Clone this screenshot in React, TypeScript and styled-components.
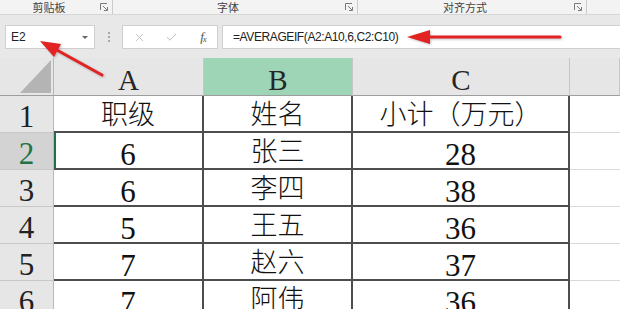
import { Fragment } from "react"
import styled, { createGlobalStyle } from "styled-components"
import { X, Check } from "lucide-react"

const GlobalStyle = createGlobalStyle`
    html, body {
        margin: 0;
        padding: 0;
        background: #ffffff;
        overflow: hidden;
    }
    body {
        font-family: "Liberation Sans", "Noto Sans CJK SC", sans-serif;
    }
`

const Page = styled.div`
    position: relative;
    width: 620px;
    height: 309px;
    overflow: hidden;
    background: #ffffff;
`

const Ribbon = styled.div`
    display: flex;
    height: 14px;
    background: #f3f3f3;
    border-bottom: 1px solid #d6d6d6;
`

const Group = styled.div<{ $w?: number }>`
    display: flex;
    align-items: center;
    box-sizing: border-box;
    width: ${p => (p.$w ? `${p.$w}px` : "auto")};
    flex: ${p => (p.$w ? "none" : "1")};
    border-right: ${p => (p.$w ? "1px solid #cbcbcb" : "none")};
`

const GroupLabel = styled.div`
    flex: 1;
    text-align: center;
    font-family: "Noto Sans CJK SC", sans-serif;
    font-size: 11px;
    line-height: 14px;
    color: #444444;
`

const Launcher = styled.div`
    width: 14px;
    display: flex;
    align-items: center;
    padding-left: 2px;
    box-sizing: border-box;
`

const FormulaBand = styled.div`
    display: flex;
    align-items: flex-start;
    height: 43px;
    box-sizing: border-box;
    padding: 10px 0 0 5px;
    background: #e8e8e8;
`

const NameBox = styled.div`
    display: flex;
    align-items: center;
    justify-content: space-between;
    width: 90px;
    height: 24px;
    box-sizing: border-box;
    padding: 0 6px 0 5px;
    background: #ffffff;
    border: 1px solid #cfcfcf;
    font-size: 12px;
    color: #222222;
`

const DropArrow = styled.span`
    width: 0;
    height: 0;
    border-left: 3px solid transparent;
    border-right: 3px solid transparent;
    border-top: 3px solid #666666;
`

const Dots = styled.div`
    width: 27px;
    height: 24px;
    display: flex;
    flex-direction: column;
    align-items: center;
    justify-content: center;
    gap: 2px;
`

const Dot = styled.span`
    width: 2px;
    height: 2px;
    background: #a8a8a8;
`

const FxBox = styled.div`
    display: grid;
    grid-template-columns: repeat(3, 32px);
    align-items: center;
    justify-items: center;
    width: 96px;
    height: 24px;
    box-sizing: border-box;
    background: #ffffff;
    border: 1px solid #cfcfcf;
    color: #b4b4b4;
`

const Fx = styled.span`
    font-family: "Liberation Serif", serif;
    font-style: italic;
    font-size: 13px;
    color: #555555;
    letter-spacing: -1px;

    sub {
        font-size: 9px;
        vertical-align: -1px;
    }
`

const FormulaInput = styled.div`
    flex: 1;
    height: 24px;
    box-sizing: border-box;
    margin-left: 4px;
    padding-left: 10px;
    background: #ffffff;
    border: 1px solid #cfcfcf;
    border-right: none;
    font-size: 12px;
    line-height: 22px;
    letter-spacing: -0.4px;
    color: #222222;
`

const Sheet = styled.div`
    display: grid;
    grid-template-columns: 54px 150px 149px 217px 1fr;
    grid-template-rows: 38px;
    grid-auto-rows: 37px;
`

const Corner = styled.div`
    display: flex;
    align-items: flex-end;
    justify-content: flex-end;
    padding: 0 2px 2px 0;
    box-sizing: border-box;
    background: #e6e6e6;
    border-right: 1px solid #b8b8b8;
    border-bottom: 1px solid #9e9e9e;
`

const CornerTriangle = styled.div`
    width: 31px;
    height: 33px;
    background: #b4b4b4;
    clip-path: polygon(100% 0, 100% 100%, 0 100%);
`

const ColHeader = styled.div<{ $selected?: boolean }>`
    display: flex;
    align-items: center;
    justify-content: center;
    box-sizing: border-box;
    padding-top: 7px;
    background: ${p => (p.$selected ? "#9fd5b7" : "#e6e6e6")};
    border-right: 1px solid #c6c6c6;
    border-bottom: 1px solid #9e9e9e;
    font-family: "Liberation Serif", serif;
    font-size: 29px;
    line-height: 1;
    color: #262626;
`

const RowHeader = styled.div<{ $selected?: boolean }>`
    display: flex;
    align-items: center;
    justify-content: center;
    box-sizing: border-box;
    padding-top: 5px;
    background: ${p => (p.$selected ? "#d3d3d3" : "#e6e6e6")};
    border-right: 1px solid #b8b8b8;
    border-bottom: 1px solid #c8c8c8;
    font-family: "Liberation Serif", serif;
    font-size: 31px;
    line-height: 1;
    color: ${p => (p.$selected ? "#217346" : "#222222")};
`

const Cell = styled.div<{ $cjk?: boolean; $active?: boolean }>`
    display: flex;
    align-items: center;
    justify-content: center;
    box-sizing: border-box;
    padding-top: ${p => (p.$cjk ? 4 : 7)}px;
    background: #ffffff;
    border-right: 2px solid #4d4d4d;
    border-bottom: 2px solid #4d4d4d;
    box-shadow: ${p => (p.$active ? "inset 2px 0 0 #217346" : "none")};
    font-family: "Liberation Serif", "Noto Sans CJK SC", serif;
    font-size: ${p => (p.$cjk ? 27 : 31)}px;
    font-weight: ${p => (p.$cjk ? 300 : 400)};
    line-height: 1;
    color: #111111;
    white-space: nowrap;
`

const EmptyCell = styled.div`
    background: #ffffff;
    border-bottom: 1px solid #d9d9d9;
`

const Overlay = styled.svg`
    position: absolute;
    top: 0;
    left: 0;
    pointer-events: none;
    filter: drop-shadow(1px 1px 1px rgba(0, 0, 0, 0.25));
`

function LauncherIcon() {
    return (
        <svg width="8" height="8" viewBox="0 0 8 8" fill="none" stroke="#7a7a7a" strokeWidth="1">
            <path d="M0.5 7 V0.5 H7" />
            <path d="M3 3 L7 7 M7.5 4 V7.5 H4" />
        </svg>
    )
}

const groups = [
    { label: "剪贴板", w: 113 },
    { label: "字体", w: 245 },
    { label: "对齐方式", w: 229 },
]

const rows: [string, string, string][] = [
    ["职级", "姓名", "小计（万元）"],
    ["6", "张三", "28"],
    ["6", "李四", "38"],
    ["5", "王五", "36"],
    ["7", "赵六", "37"],
    ["7", "阿伟", "36"],
]

const isCjk = (s: string) => /[\u4e00-\u9fff]/.test(s)

export default function App() {
    return (
        <Page>
            <GlobalStyle />
            <Ribbon>
                {groups.map(g => (
                    <Group key={g.label} $w={g.w}>
                        <GroupLabel>{g.label}</GroupLabel>
                        <Launcher>
                            <LauncherIcon />
                        </Launcher>
                    </Group>
                ))}
                <Group />
            </Ribbon>

            <FormulaBand>
                <NameBox>
                    <span>E2</span>
                    <DropArrow />
                </NameBox>
                <Dots>
                    <Dot />
                    <Dot />
                    <Dot />
                </Dots>
                <FxBox>
                    <X size={13} strokeWidth={1.4} />
                    <Check size={13} strokeWidth={1.6} />
                    <Fx>f<sub>x</sub></Fx>
                </FxBox>
                <FormulaInput>=AVERAGEIF(A2:A10,6,C2:C10)</FormulaInput>
            </FormulaBand>

            <Sheet>
                <Corner>
                    <CornerTriangle />
                </Corner>
                <ColHeader>A</ColHeader>
                <ColHeader $selected>B</ColHeader>
                <ColHeader>C</ColHeader>
                <ColHeader />

                {rows.map((r, i) => (
                    <Fragment key={i}>
                        <RowHeader $selected={i === 1}>{i + 1}</RowHeader>
                        {r.map((v, j) => (
                            <Cell key={j} $cjk={isCjk(v)} $active={i === 1 && j === 0}>
                                {v}
                            </Cell>
                        ))}
                        <EmptyCell />
                    </Fragment>
                ))}
            </Sheet>

            <Overlay width="620" height="309" viewBox="0 0 620 309">
                <line x1="102" y1="75" x2="55" y2="49" stroke="#e32222" strokeWidth="3" strokeLinecap="round" />
                <polygon points="40,41 61,44 54,57" fill="#e32222" />
                <line x1="560" y1="37" x2="424" y2="37" stroke="#e32222" strokeWidth="3" strokeLinecap="round" />
                <polygon points="407,37 430,30 430,44" fill="#e32222" />
            </Overlay>
        </Page>
    )
}
